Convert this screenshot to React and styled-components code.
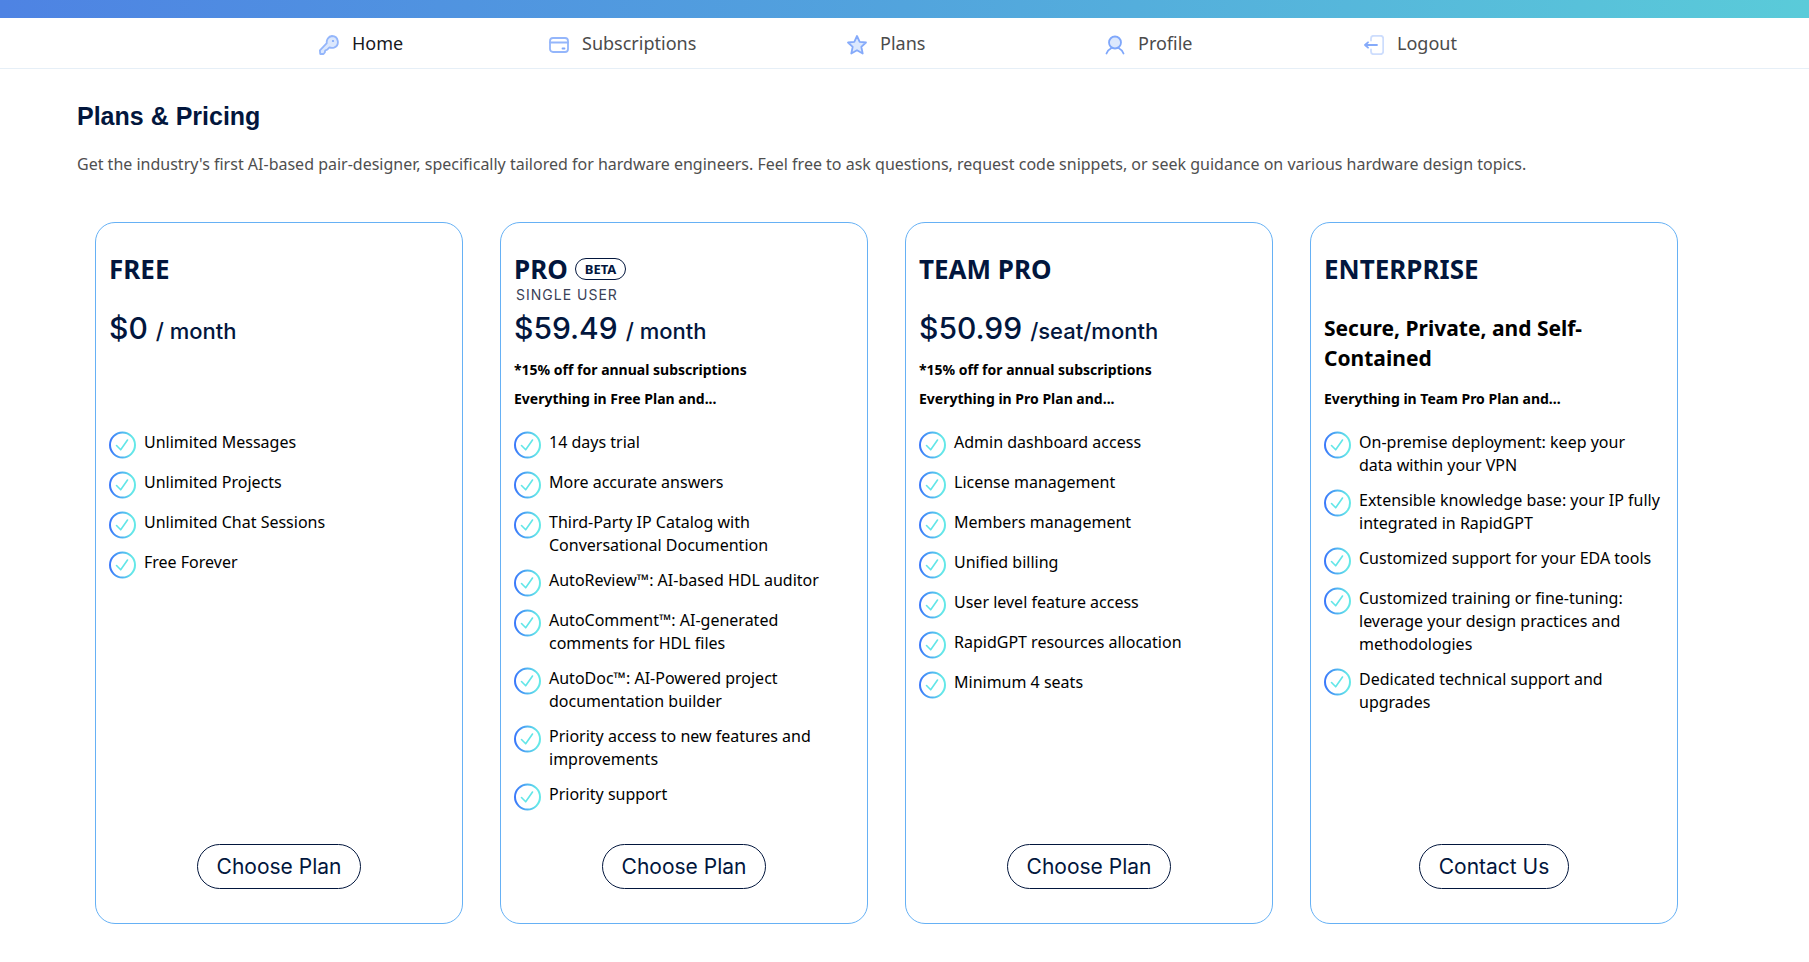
import React from "react";
import styled, { createGlobalStyle } from "styled-components";

const sans = `"Noto Sans", "Open Sans", sans-serif`;
const display = `Inter, "Open Sans", sans-serif`;
const navy = "#02163d";

const GlobalStyle = createGlobalStyle`
  *, *::before, *::after { box-sizing: border-box; }
  body { margin: 0; background: #fff; color: #000; font-family: ${sans}; }
  h1, h2, h3, p, ul { margin: 0; padding: 0; }
  ul { list-style: none; }
`;

const TopBar = styled.div`
  height: 18px;
  background: linear-gradient(90deg, #4e83e3, #52a4dd 50%, #5acbd9);
`;

const Nav = styled.nav`
  height: 51px;
  padding-left: 319px;
  border-bottom: 1px solid #e6eff7;
  display: grid;
  grid-template-columns: 230fr 298fr 258fr 259fr 445fr;
  align-items: center;
`;

const NavLink = styled.a`
  display: flex;
  align-items: center;
  gap: 13px;
  justify-self: start;
  font-size: 18px;
  line-height: 24px;
  text-decoration: none;
  color: ${(p) => (p.$active ? "#16181d" : "#4b4b4b")};

  svg {
    flex: none;
    margin-top: 4px;
  }
`;

const Main = styled.main`
  padding: 32px 77px 38px;
`;

const PageTitle = styled.h1`
  font: bold 25px/30px "Liberation Sans", Arial, sans-serif;
  color: ${navy};
`;

const Intro = styled.p`
  margin-top: 20px;
  font-size: 16px;
  line-height: 26px;
  color: #4f4f4f;
`;

const Plans = styled.div`
  margin-top: 45px;
  padding: 0 54px 0 18px;
  display: grid;
  grid-template-columns: repeat(4, minmax(0, 1fr));
  gap: 37px;
`;

const Card = styled.section`
  display: flex;
  flex-direction: column;
  padding: 30px 13px 34px;
  border: 1px solid #66b1f5;
  border-radius: 20px;
`;

const CardHeader = styled.header`
  min-height: 178px;
  display: flex;
  flex-direction: column;
`;

const TitleRow = styled.div`
  display: flex;
  align-items: center;
  gap: 7px;
  height: 32px;
`;

const PlanName = styled.h2`
  font-size: 26px;
  line-height: 32px;
  font-weight: 700;
  color: ${navy};
`;

const Badge = styled.span`
  height: 22px;
  padding: 0 9px;
  border: 1px solid ${navy};
  border-radius: 11px;
  font-size: 13px;
  line-height: 20px;
  font-weight: 700;
  color: ${navy};
`;

const Audience = styled.p`
  height: 23px;
  padding-left: 2px;
  font: 400 14px/20px ${display};
  letter-spacing: 1px;
  color: #3b4257;
`;

const Price = styled.p`
  font: 500 30px/40px ${display};
  color: ${navy};
`;

const Period = styled.span`
  font-size: 22px;
`;

const Tagline = styled.h3`
  margin-top: 5px;
  font-size: 21px;
  line-height: 30px;
  font-weight: 700;
`;

const Notes = styled.div`
  margin-top: auto;
  padding-bottom: 18px;
`;

const Note = styled.p`
  font-size: 14px;
  line-height: 29px;
  font-weight: 700;
`;

const Features = styled.ul`
  display: flex;
  flex-direction: column;
  gap: 12px;
  margin: 0 2px 33px 0;
`;

const Feature = styled.li`
  display: flex;
  gap: 7px;
  min-height: 28px;
  font-size: 16px;
  line-height: 23px;

  svg {
    flex: none;
  }
`;

const Action = styled.button`
  align-self: center;
  margin-top: auto;
  height: 45px;
  padding: 0 19px;
  border: 1px solid ${navy};
  border-radius: 23px;
  background: #fff;
  font: 400 21px/28px ${display};
  color: ${navy};
  cursor: pointer;
`;

const iconProps = {
  width: 20,
  height: 20,
  viewBox: "0 0 20 20",
  fill: "none",
  strokeWidth: 1.8,
  strokeLinecap: "round",
  strokeLinejoin: "round",
  "aria-hidden": true,
};

const icons = {
  key: (
    <svg {...iconProps} stroke="#94b6fb">
      <path
        fill="#dce8fd"
        d="M13 1a6 6 0 0 1 2 11.6c-1.800.6-3.300.4-4.500-.2L8.200 14.700l-2 .8-.4 2L4.500 19H1.200l-.3-3.600 6.900-7.300A6 6 0 0 1 13 1z"
      />
      <circle cx="14" cy="6" r="1.100" fill="#7fa7fb" stroke="none" />
    </svg>
  ),
  card: (
    <svg {...iconProps} stroke="#94b6fb">
      <rect x="1" y="3" width="18" height="14" rx="3" />
      <path d="M1 7.500h18" />
      <path d="M13.500 13.500h2" stroke="#7fa7fb" />
    </svg>
  ),
  star: (
    <svg {...iconProps} stroke="#85aafa">
      <path
        fill="#dce8fd"
        d="M10 1l2.700 5.800 6.300.7-4.700 4.300 1.400 6.700L10 15.200l-5.700 3.300 1.400-6.700L1 7.500l6.300-.7z"
      />
    </svg>
  ),
  user: (
    <svg {...iconProps} stroke="#7fa7fb">
      <circle cx="10" cy="7.500" r="6" fill="#dce8fd" />
      <path d="M1.500 18.500c1.200-3 3-4.500 5-5.500M18.500 18.500c-1.200-3-3-4.500-5-5.500" />
    </svg>
  ),
  logout: (
    <svg {...iconProps} stroke="#cdddfd">
      <path d="M7 5.500V3.500C7 2 8 .8 9.500.8h7C18 .8 19.200 2 19.200 3.500v13c0 1.500-1.200 2.700-2.700 2.700h-7C8 19.200 7 18 7 16.500v-2" />
      <path stroke="#85aafa" d="M13 10H1M4 7.300 1 10l3 2.700" />
    </svg>
  ),
};

function CheckIcon() {
  return (
    <svg width="28" height="28" viewBox="0 0 28 28" fill="none" aria-hidden="true">
      <circle cx="13.500" cy="14" r="12.500" stroke="url(#ring)" strokeWidth="2" />
      <path
        d="M7.500 14.500l4.200 4.300 6.800-9.800"
        stroke="#62e6e8"
        strokeWidth="1.600"
        strokeLinecap="round"
        strokeLinejoin="round"
      />
    </svg>
  );
}

const HiddenDefs = styled.svg`
  position: absolute;
`;

function GradientDefs() {
  return (
    <HiddenDefs width="0" height="0" aria-hidden="true">
      <defs>
        <linearGradient id="ring" x1="0" y1="0" x2="1" y2="0">
          <stop offset="0" stopColor="#3a78fb" />
          <stop offset="0.900" stopColor="#64e8e8" />
        </linearGradient>
      </defs>
    </HiddenDefs>
  );
}

const links = [
  { icon: "key", label: "Home", active: true },
  { icon: "card", label: "Subscriptions" },
  { icon: "star", label: "Plans" },
  { icon: "user", label: "Profile" },
  { icon: "logout", label: "Logout" },
];

const plans = [
  {
    name: "FREE",
    price: "$0",
    period: "/ month",
    notes: [],
    features: ["Unlimited Messages", "Unlimited Projects", "Unlimited Chat Sessions", "Free Forever"],
    action: "Choose Plan",
  },
  {
    name: "PRO",
    badge: "BETA",
    audience: "SINGLE USER",
    price: "$59.49",
    period: "/ month",
    notes: ["*15% off for annual subscriptions", "Everything in Free Plan and..."],
    features: [
      "14 days trial",
      "More accurate answers",
      "Third-Party IP Catalog with Conversational Documention",
      "AutoReview™: AI-based HDL auditor",
      "AutoComment™: AI-generated comments for HDL files",
      "AutoDoc™: AI-Powered project documentation builder",
      "Priority access to new features and improvements",
      "Priority support",
    ],
    action: "Choose Plan",
  },
  {
    name: "TEAM PRO",
    price: "$50.99",
    period: "/seat/month",
    notes: ["*15% off for annual subscriptions", "Everything in Pro Plan and..."],
    features: [
      "Admin dashboard access",
      "License management",
      "Members management",
      "Unified billing",
      "User level feature access",
      "RapidGPT resources allocation",
      "Minimum 4 seats",
    ],
    action: "Choose Plan",
  },
  {
    name: "ENTERPRISE",
    tagline: "Secure, Private, and Self-Contained",
    notes: ["Everything in Team Pro Plan and..."],
    features: [
      "On-premise deployment: keep your data within your VPN",
      "Extensible knowledge base: your IP fully integrated in RapidGPT",
      "Customized support for your EDA tools",
      "Customized training or fine-tuning: leverage your design practices and methodologies",
      "Dedicated technical support and upgrades",
    ],
    action: "Contact Us",
  },
];

function PlanCard({ plan }) {
  return (
    <Card>
      <CardHeader>
        <TitleRow>
          <PlanName>{plan.name}</PlanName>
          {plan.badge && <Badge>{plan.badge}</Badge>}
        </TitleRow>
        <Audience>{plan.audience}</Audience>
        {plan.price && (
          <Price>
            {plan.price} <Period>{plan.period}</Period>
          </Price>
        )}
        {plan.tagline && <Tagline>{plan.tagline}</Tagline>}
        <Notes>
          {plan.notes.map((note) => (
            <Note key={note}>{note}</Note>
          ))}
        </Notes>
      </CardHeader>
      <Features>
        {plan.features.map((feature) => (
          <Feature key={feature}>
            <CheckIcon />
            <span>{feature}</span>
          </Feature>
        ))}
      </Features>
      <Action type="button">{plan.action}</Action>
    </Card>
  );
}

export default function App() {
  return (
    <>
      <GlobalStyle />
      <GradientDefs />
      <TopBar />
      <Nav>
        {links.map((link) => (
          <NavLink key={link.label} href="#" $active={link.active}>
            {icons[link.icon]}
            {link.label}
          </NavLink>
        ))}
      </Nav>
      <Main>
        <PageTitle>Plans &amp; Pricing</PageTitle>
        <Intro>
          Get the industry's first AI-based pair-designer, specifically tailored for hardware engineers. Feel free to
          ask questions, request code snippets, or seek guidance on various hardware design topics.
        </Intro>
        <Plans>
          {plans.map((plan) => (
            <PlanCard key={plan.name} plan={plan} />
          ))}
        </Plans>
      </Main>
    </>
  );
}
